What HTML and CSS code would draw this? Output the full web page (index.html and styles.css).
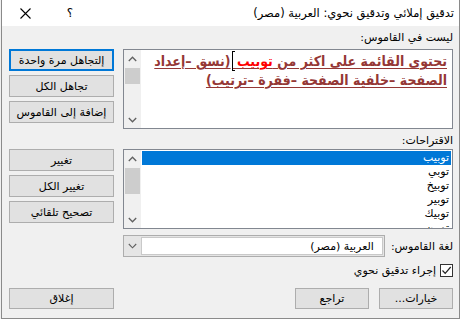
FILE: index.html
```html
<!DOCTYPE html>
<html lang="ar" dir="rtl">
<head>
<meta charset="utf-8">
<link rel="stylesheet" href="styles.css">
</head>
<body>
<div class="dialog">
  <div class="titlebar">
    <span class="title">تدقيق إملائي وتدقيق نحوي: العربية (مصر)</span>
    <span class="tb-btn help">؟</span>
    <span class="tb-btn close"><svg width="11" height="11" viewBox="0 0 11 11"><path d="M0.5 0.5 L10.5 10.5 M10.5 0.5 L0.5 10.5" stroke="#000" stroke-width="1.1" fill="none"/></svg></span>
  </div>
  <div class="body">
    <div class="section first">
      <div class="main">
        <div class="label">ليست في القاموس:</div>
        <div class="box textbox">
          <div class="text">
            <span class="line">تحتوى القائمة على اكثر من <span class="err">توبيب</span> <span class="caret"></span>(نسق –إعداد</span>
            <span class="line">الصفحة –خلفية الصفحة –فقرة –ترتيب)</span>
          </div>
          <div class="scrollbar">
            <svg class="arrow" width="9" height="6" viewBox="0 0 9 6"><polyline points="0.8,5 4.5,1.2 8.2,5" stroke="#606060" stroke-width="1.3" fill="none"/></svg>
            <div class="thumb short"></div>
            <div class="fill"></div>
            <svg class="arrow" width="9" height="6" viewBox="0 0 9 6"><polyline points="0.8,1 4.5,4.8 8.2,1" stroke="#606060" stroke-width="1.3" fill="none"/></svg>
          </div>
        </div>
      </div>
      <div class="buttons b1">
        <div class="btn focused">إلتجاهل مرة واحدة</div>
        <div class="btn">تجاهل الكل</div>
        <div class="btn">إضافة إلى القاموس</div>
      </div>
    </div>

    <div class="section second">
      <div class="main">
        <div class="label">الاقتراحات:</div>
        <div class="box listbox">
          <div class="items">
            <div class="item selected">توبيب</div>
            <div class="item">توبي</div>
            <div class="item">توبيخ</div>
            <div class="item">توبير</div>
            <div class="item">توبيك</div>
            <div class="item">توبين</div>
          </div>
          <div class="scrollbar">
            <svg class="arrow" width="9" height="6" viewBox="0 0 9 6"><polyline points="0.8,5 4.5,1.2 8.2,5" stroke="#606060" stroke-width="1.3" fill="none"/></svg>
            <div class="thumb tall"></div>
            <div class="fill"></div>
            <svg class="arrow" width="9" height="6" viewBox="0 0 9 6"><polyline points="0.8,1 4.5,4.8 8.2,1" stroke="#606060" stroke-width="1.3" fill="none"/></svg>
          </div>
        </div>
      </div>
      <div class="buttons b2">
        <div class="btn">تغيير</div>
        <div class="btn">تغيير الكل</div>
        <div class="btn">تصحيح تلقائي</div>
      </div>
    </div>

    <div class="langrow">
      <span class="langlabel">لغة القاموس:</span>
      <div class="combo">
        <div class="combofield">العربية (مصر)</div>
        <div class="combodrop"><svg width="9" height="6" viewBox="0 0 9 6"><polyline points="0.8,1 4.5,4.8 8.2,1" stroke="#606060" stroke-width="1.1" fill="none"/></svg></div>
      </div>
    </div>

    <div class="checkrow">
      <span class="checkbox"><svg width="11" height="11" viewBox="0 0 11 11"><polyline points="1.5,5.5 4.2,8.3 9.7,2" stroke="#222" stroke-width="1.2" fill="none"/></svg></span>
      <span class="checklabel">إجراء تدقيق نحوي</span>
    </div>

    <div class="bottomrow">
      <div class="btn small">خيارات...</div>
      <div class="btn small">تراجع</div>
      <div class="btn close-btn">إغلاق</div>
    </div>
  </div>
</div>
</body>
</html>
```

FILE: styles.css
```css
html, body {
  margin: 0;
  padding: 0;
  background: #f0f0f0;
}
body {
  width: 460px;
  height: 319px;
  overflow: hidden;
  font-family: "DejaVu Sans", "Noto Sans", sans-serif;
  font-size: 11px;
  color: #000;
}
.dialog {
  direction: rtl;
  width: 459px;
  height: 319px;
  box-sizing: border-box;
  border-left: 1px solid #8a8a8a;
  border-right: 1px solid #8a8a8a;
  border-bottom: 1px solid #8a8a8a;
  background: #f0f0f0;
}
.titlebar {
  height: 26px;
  background: #fff;
  display: flex;
  align-items: center;
}
.title {
  padding-right: 5px;
  font-size: 11.5px;
}
.tb-btn {
  display: flex;
  align-items: center;
  justify-content: center;
  height: 26px;
}
.help {
  margin-right: auto;
  width: 44px;
  font-size: 12px;
}
.close {
  width: 46px;
}
.body {
  padding: 4px 6px 0 7px;
}
.section {
  display: flex;
  gap: 9px;
  align-items: flex-start;
}
.section.second {
  margin-top: 4px;
}
.main {
  width: 330px;
}
.label {
  height: 16px;
  line-height: 16px;
}
.section.first .label {
  margin-bottom: 3px;
}
.box {
  height: 80px;
  box-sizing: border-box;
  border: 1px solid #828790;
  background: #fff;
  display: flex;
}
.text {
  flex: 1;
  min-width: 0;
  overflow: hidden;
  padding: 1px 5px 0 0;
  color: #953735;
  font-family: "DejaVu Sans Condensed", "DejaVu Sans", sans-serif;
  font-weight: bold;
  font-size: 14px;
  line-height: 19px;
  text-decoration: underline;
  text-decoration-thickness: 1px;
  text-underline-offset: 2px;
}
.line {
  display: block;
  white-space: nowrap;
}
.err {
  color: #ff0000;
}
.caret {
  display: inline-block;
  position: relative;
  width: 1px;
  height: 20px;
  background: #000;
  vertical-align: -5px;
  margin-left: 1px;
}
.caret::before, .caret::after {
  content: "";
  position: absolute;
  right: -2px;
  width: 3px;
  height: 1px;
  background: #000;
}
.caret::before { top: 0; }
.caret::after { bottom: 0; }
.scrollbar {
  width: 17px;
  flex: none;
  background: #f0f0f0;
  display: flex;
  flex-direction: column;
  align-items: center;
}
.scrollbar .arrow {
  margin: 5px 0;
  flex: none;
}
.scrollbar .arrow:first-child {
  margin-top: 6px;
}
.scrollbar .arrow:last-child {
  margin-bottom: 5px;
}
.thumb {
  width: 15px;
  background: #cdcdcd;
  flex: none;
}
.thumb.short { height: 16px; margin-top: 1px; }
.thumb.tall { height: 26px; margin-top: 1px; }
.fill { flex: 1; }
.items {
  flex: 1;
  min-width: 0;
  padding: 1px 1px 0 1px;
  overflow: hidden;
}
.item {
  height: 14px;
  line-height: 14px;
  padding-right: 2px;
  font-size: 11px;
}
.item.selected {
  background: #0078d7;
  color: #fff;
}
.buttons {
  width: 105px;
  display: flex;
  flex-direction: column;
  gap: 4px;
}
.buttons.b1 { padding-top: 19px; }
.buttons.b2 { padding-top: 16px; }
.btn {
  height: 22px;
  box-sizing: border-box;
  border: 1px solid #adadad;
  background: #e1e1e1;
  display: flex;
  align-items: center;
  justify-content: center;
  font-size: 11px;
}
.btn.focused {
  border: 2px solid #0078d7;
}
.langrow {
  width: 330px;
  margin-top: 6px;
  display: flex;
  align-items: center;
  gap: 6px;
  height: 22px;
}
.langlabel {
  white-space: nowrap;
}
.combo {
  flex: 1;
  height: 22px;
  box-sizing: border-box;
  border: 1px solid #adadad;
  background: #e5e5e5;
  display: flex;
}
.combofield {
  flex: 1;
  background: #fff;
  border: 1px solid #c9c9c9;
  margin: 1px 1px 1px 0;
  display: flex;
  align-items: center;
  padding-right: 8px;
}
.combodrop {
  width: 17px;
  display: flex;
  align-items: center;
  justify-content: center;
}
.checkrow {
  margin-top: 6px;
  height: 14px;
  display: flex;
  align-items: center;
  gap: 4px;
}
.checkbox {
  width: 13px;
  height: 13px;
  box-sizing: border-box;
  border: 1px solid #333;
  background: #fff;
  display: flex;
  align-items: center;
  justify-content: center;
}
.bottomrow {
  margin-top: 11px;
  display: flex;
  gap: 10px;
}
.bottomrow .btn {
  height: 21px;
}
.btn.small { width: 74px; }
.btn.close-btn {
  width: 105px;
  margin-right: auto;
}
```
